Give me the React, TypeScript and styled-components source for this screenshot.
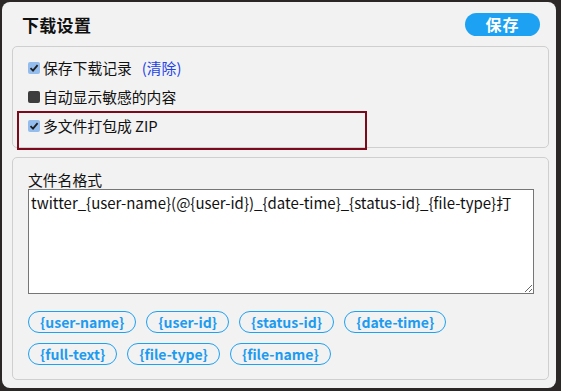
import React, {useState} from 'react';
import styled, {createGlobalStyle} from "styled-components";

const GlobalStyle = createGlobalStyle`
  html, body {
    margin: 0;
    padding: 0;
    background: #2b2727;
  }
  body {
    font-family: "Noto Sans CJK SC", "Noto Sans", sans-serif;
    color: #111;
  }
`;

const Dialog = styled.div`
  box-sizing: border-box;
  margin: 2px 0 0 2px;
  width: 554px;
  height: 386px;
  background: #f2f2f2;
  border-radius: 8px;
  padding: 0 7px 0 10px;
`;

const Header = styled.header`
  height: 44px;
  display: flex;
  align-items: center;
  justify-content: space-between;
  padding: 0 9px 0 10px;
`;

const Title = styled.h1`
  margin: 0;
  font-size: 17px;
  font-weight: 700;
  letter-spacing: 0.3px;
`;

const SaveButton = styled.button`
  width: 75px;
  height: 23px;
  border: none;
  border-radius: 12px;
  background: #1da1f2;
  color: #fff;
  font-family: inherit;
  font-size: 16px;
  font-weight: 700;
  line-height: 23px;
  padding: 0;
  letter-spacing: 1px;
`;

const Section = styled.section<{$gap?: number}>`
  box-sizing: border-box;
  border: 1px solid #cfcfcf;
  border-radius: 5px;
  margin-top: ${p => p.$gap ?? 0}px;
`;

const OptionList = styled(Section)`
  padding: 6px 0 7px 0;
`;

const Option = styled.label<{$marked?: boolean}>`
  position: relative;
  display: flex;
  align-items: center;
  height: 29px;
  padding-left: 15px;
  font-size: 14.8px;

  ${p => p.$marked && `
    &::after {
      content: "";
      position: absolute;
      left: 4px;
      top: 0;
      width: 346px;
      height: 35px;
      border: 2px solid #7c0a1c;
    }
  `}
`;

const Box = styled.span<{$checked: boolean}>`
  width: 12px;
  height: 12px;
  margin-right: 3px;
  border-radius: 2px;
  background: ${p => p.$checked ? '#94bdee' : '#3d3d3d'};
  display: flex;
  align-items: center;
  justify-content: center;
`;

const ClearLink = styled.a`
  margin-left: 10px;
  color: #2342e8;
  cursor: pointer;
`;

const FormatSection = styled(Section)`
  padding: 12px 14px 15px 15px;
  height: 223px;
`;

const FieldLabel = styled.div`
  font-size: 14.8px;
  line-height: 19px;
`;

const FormatInput = styled.textarea`
  display: block;
  box-sizing: border-box;
  width: 100%;
  height: 105px;
  margin: 0;
  padding: 3px 2px;
  border: 1px solid #767676;
  background: #fff;
  font-family: "Noto Sans CJK SC", "Noto Sans", sans-serif;
  font-size: 15px;
  line-height: 20px;
  color: #111;
  resize: vertical;
  outline: none;
`;

const TagGrid = styled.div`
  display: flex;
  flex-wrap: wrap;
  gap: 10px;
  margin-top: 17px;
  width: 440px;
`;

const Tag = styled.button`
  height: 22px;
  padding: 0 11px;
  border: 1.5px solid #1da1f2;
  border-radius: 11px;
  background: transparent;
  color: #1d9bf0;
  font-family: "Noto Sans CJK SC", "Noto Sans", sans-serif;
  font-size: 14px;
  font-weight: 700;
  line-height: 19px;
`;

function Check({checked}: {checked: boolean}) {
    return (
        <Box $checked={checked}>
            {checked && (
                <svg width="10" height="10" viewBox="0 0 10 10">
                    <path d="M1.5 5.2 L4 7.6 L8.6 2.2" fill="none" stroke="#1f1f1f" strokeWidth="1.8"/>
                </svg>
            )}
        </Box>
    );
}

const tags = ['{user-name}', '{user-id}', '{status-id}', '{date-time}', '{full-text}', '{file-type}', '{file-name}'];

export default function App() {
    const [pattern, setPattern] = useState('twitter_{user-name}(@{user-id})_{date-time}_{status-id}_{file-type}打');

    return (
        <>
            <GlobalStyle/>
            <Dialog>
                <Header>
                    <Title>下载设置</Title>
                    <SaveButton>保存</SaveButton>
                </Header>

                <OptionList>
                    <Option>
                        <Check checked/>
                        保存下载记录
                        <ClearLink>(清除)</ClearLink>
                    </Option>
                    <Option>
                        <Check checked={false}/>
                        自动显示敏感的内容
                    </Option>
                    <Option $marked>
                        <Check checked/>
                        多文件打包成 ZIP
                    </Option>
                </OptionList>

                <FormatSection $gap={9}>
                    <FieldLabel>文件名格式</FieldLabel>
                    <FormatInput value={pattern} onChange={e => setPattern(e.target.value)}/>
                    <TagGrid>
                        {tags.map(t => <Tag key={t}>{t}</Tag>)}
                    </TagGrid>
                </FormatSection>
            </Dialog>
        </>
    );
}
